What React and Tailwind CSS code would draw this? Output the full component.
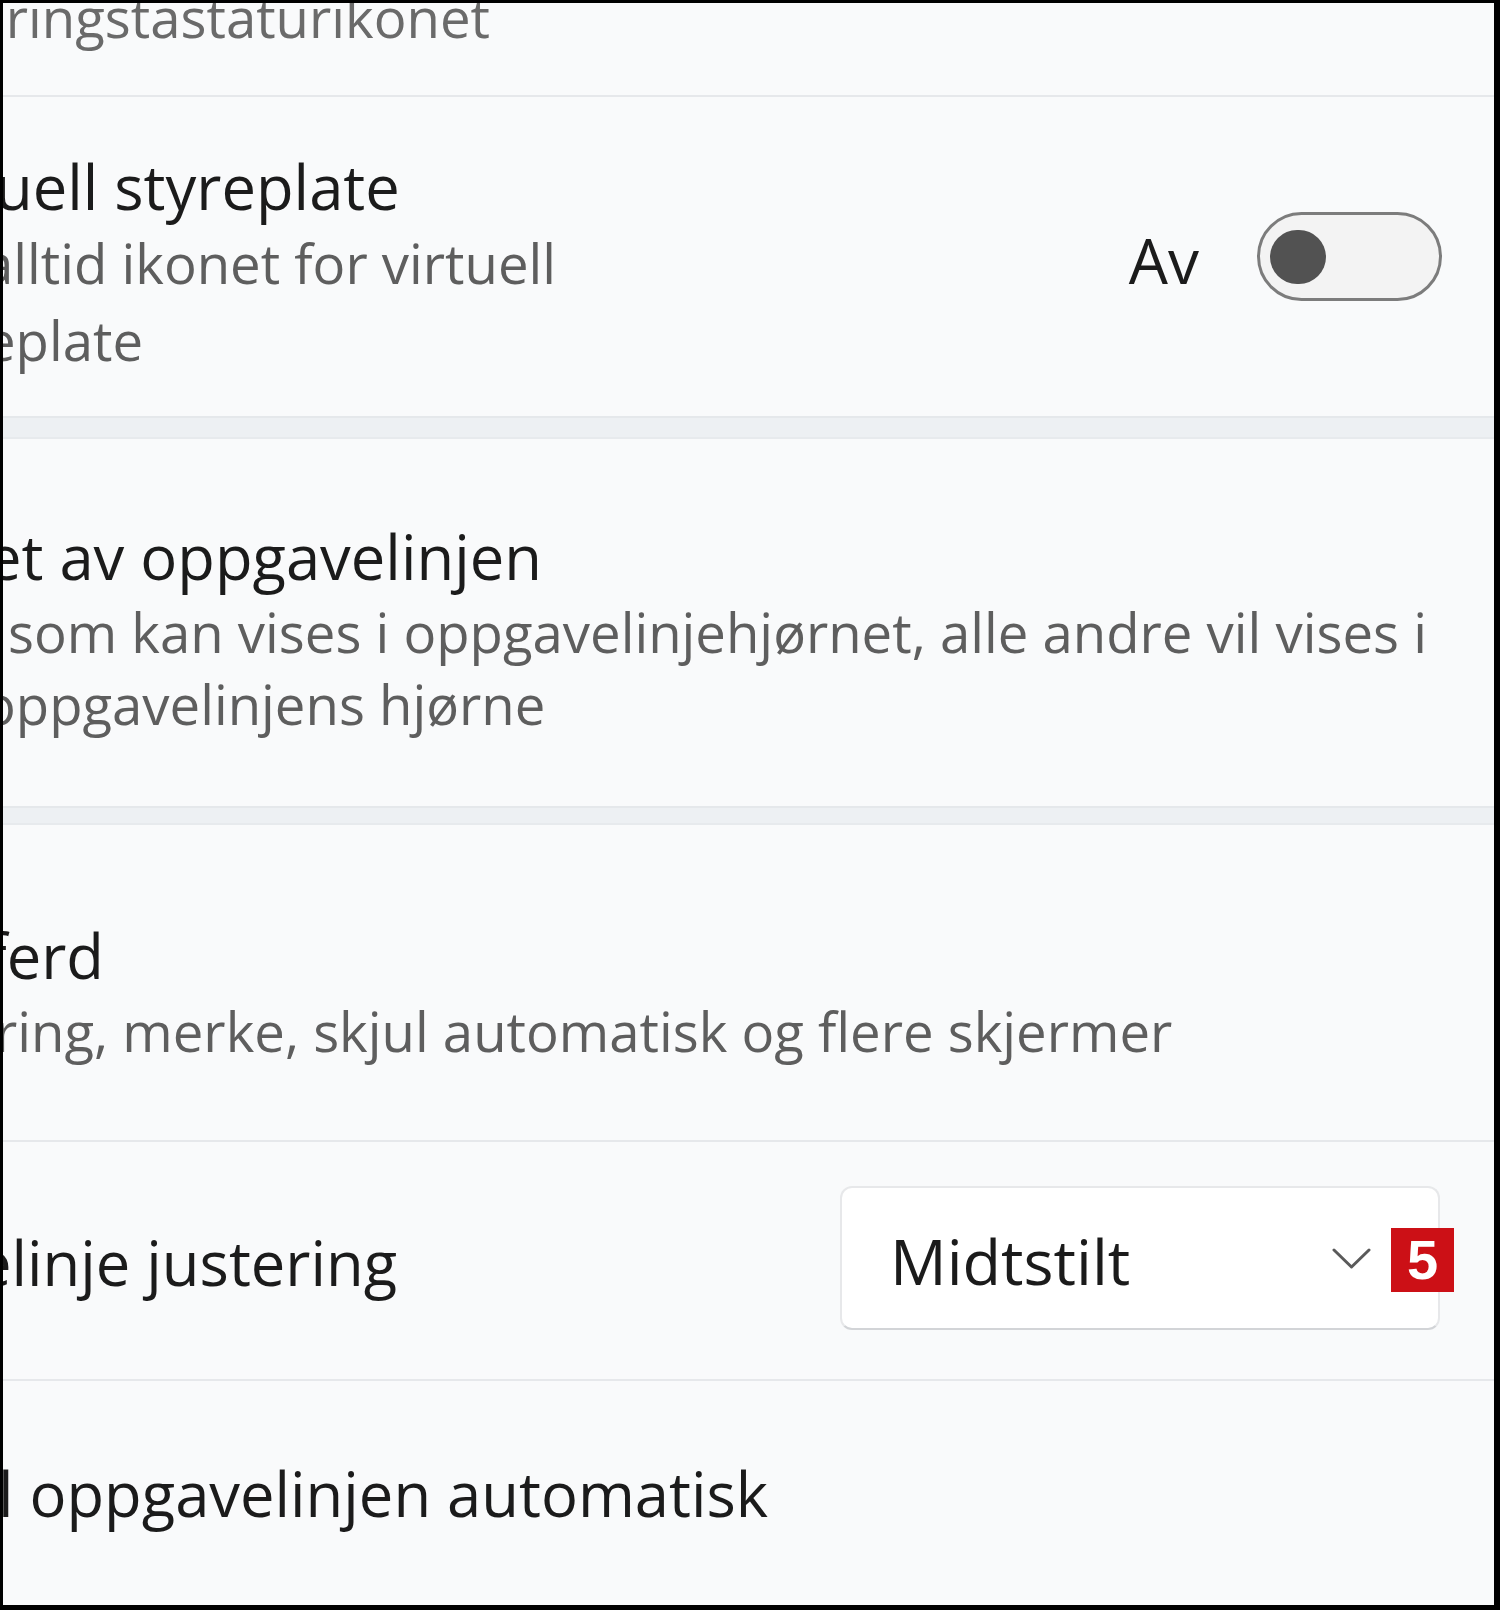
export default function App() {
  const title = "text-[61.5px] leading-[80px] text-[#1b1b1b] whitespace-nowrap";
  const desc = "text-[54.5px] leading-[72px] text-[#5e5e5e] whitespace-nowrap";
  return (
    <div className="w-[1500px] h-[1610px] bg-black pt-[3px] pl-[3px] pr-[6px] pb-[5px]">
      <div className="h-full bg-[#f9fafb] overflow-hidden flex flex-col font-['Open_Sans','Noto_Sans',sans-serif]">
        {/* Row 0 */}
        <div className="h-[92px] shrink-0">
          <div className={`${desc} text-[#6a6a6a] mt-[-22px] ml-[-30px]`}>øringstastaturikonet</div>
        </div>
        <div className="h-[2px] shrink-0 bg-[#e6e8eb]" />

        {/* Row 1 */}
        <div className="h-[319px] shrink-0 flex">
          <div className="flex-1 min-w-0 pt-[49px]">
            <div className={`${title} ml-[-8px]`}>uell styreplate</div>
            <div className={`${desc} ml-[-20px] mt-[1px]`}>alltid ikonet for virtuell</div>
            <div className={`${desc} ml-[-18px] mt-[5px]`}>eplate</div>
          </div>
          <div className="flex items-center pr-[52px] gap-[58px]">
            <span className="text-[62px] leading-[80px] text-[#1b1b1b] mt-[6px]">Av</span>
            <div className="w-[185px] h-[89px] rounded-full border-[3px] border-[#7c7c7c] bg-[#f3f3f3] flex items-center pl-[10px]">
              <div className="w-[56px] h-[54px] rounded-full bg-[#525252]" />
            </div>
          </div>
        </div>
        <div className="h-[23px] shrink-0 bg-[#edf0f3] border-t-2 border-b-2 border-t-[#e5e8eb] border-b-[#e7eaed]" />

        {/* Row 2 */}
        <div className="h-[367px] shrink-0 pt-[77px]">
          <div className={`${title} ml-[-16px]`}>et av oppgavelinjen</div>
          <div className={`${desc} ml-[5px]`}>som kan vises i oppgavelinjehjørnet, alle andre vil vises i</div>
          <div className={`${desc} ml-[-20px]`}>oppgavelinjens hjørne</div>
        </div>
        <div className="h-[19px] shrink-0 bg-[#edf0f3] border-t-2 border-b-2 border-t-[#e5e8eb] border-b-[#e7eaed]" />

        {/* Row 3 */}
        <div className="h-[315px] shrink-0 pt-[90px]">
          <div className={`${title} ml-[-17px]`}>ferd</div>
          <div className={`${desc} ml-[-8px]`}>ring, merke, skjul automatisk og flere skjermer</div>
        </div>
        <div className="h-[2px] shrink-0 bg-[#e6e8eb]" />

        {/* Row 4 */}
        <div className="h-[237px] shrink-0 flex items-start">
          <div className="flex-1 min-w-0 pt-[80px]">
            <div className={`${title} ml-[-26px]`}>elinje justering</div>
          </div>
          <div className="relative w-[600px] h-[144px] mt-[44px] mr-[54px] bg-white rounded-[12px] border-2 border-[#e7e8ea] border-b-[#d2d4d7] flex items-center justify-between pl-[48px] pr-[67px]">
            <span className="text-[63px] leading-[80px] text-[#1b1b1b] mt-[6px]">Midtstilt</span>
            <svg width="39" height="21" viewBox="0 0 39 21" fill="none">
              <polyline points="2,2 19.5,19 37,2" stroke="#5a5a5a" strokeWidth="3" strokeLinecap="round" strokeLinejoin="round" />
            </svg>
            <div className="absolute left-[549px] top-[40px] w-[63px] h-[64px] bg-[#cc1016] flex items-center justify-center text-white font-bold text-[56px] leading-none font-['Liberation_Sans',sans-serif]">5</div>
          </div>
        </div>
        <div className="h-[2px] shrink-0 bg-[#e6e8eb]" />

        {/* Row 5 */}
        <div className="flex-1 pt-[72px]">
          <div className={`${title} ml-[-5px]`}>l oppgavelinjen automatisk</div>
        </div>
      </div>
    </div>
  );
}
